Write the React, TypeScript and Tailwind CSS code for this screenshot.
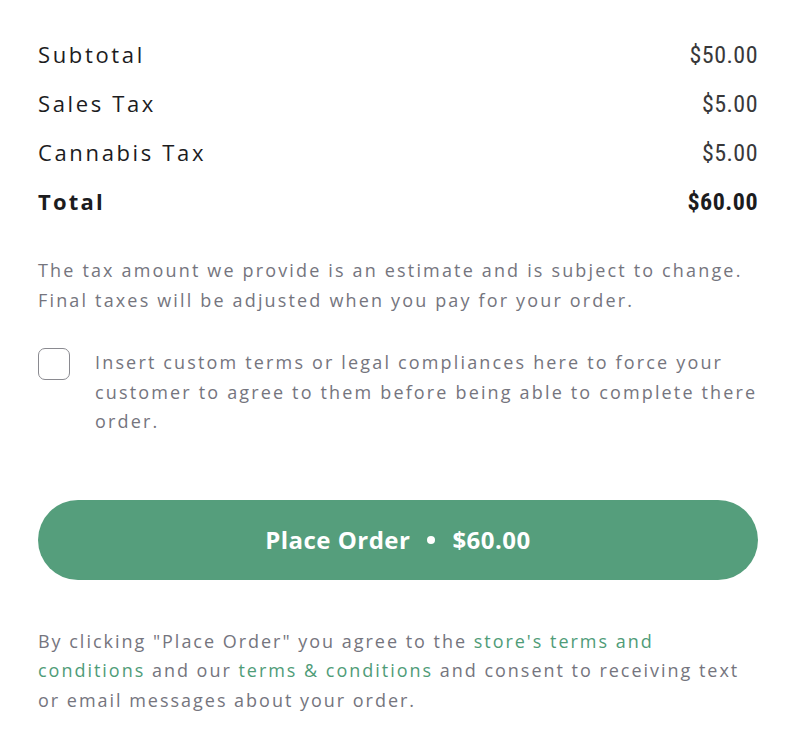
export default function App() {
  const rows = [
    { label: "Subtotal", value: "$50.00" },
    { label: "Sales Tax", value: "$5.00" },
    { label: "Cannabis Tax", value: "$5.00" },
  ];
  const sans = "font-['Open_Sans','Noto_Sans',sans-serif]";
  const num = "font-['Roboto_Condensed','Liberation_Sans_Narrow','DejaVu_Sans_Condensed',sans-serif]";

  return (
    <div className={`min-h-screen bg-white px-[38px] pt-[30px] ${sans}`}>
      {/* totals */}
      <div className="flex flex-col">
        {rows.map((r) => (
          <div key={r.label} className="flex h-[49px] items-center justify-between">
            <span className="text-[22px] tracking-[0.12em] text-[#1c1c1e]">{r.label}</span>
            <span className={`text-[24px] tracking-[0.02em] text-[#38383a] ${num}`}>{r.value}</span>
          </div>
        ))}
        <div className="flex h-[49px] items-center justify-between">
          <span className="text-[22px] font-bold tracking-[0.1em] text-[#1c1c1e]">Total</span>
          <span className={`text-[24px] font-bold tracking-[0.02em] text-[#1c1c1e] ${num}`}>$60.00</span>
        </div>
      </div>

      <p className="mt-[29px] text-[18px] leading-[30px] tracking-[0.12em] text-[#75757e]">
        The tax amount we provide is an estimate and is subject to change. Final taxes will be
        adjusted when you pay for your order.
      </p>

      <label className="mt-[33px] flex items-start gap-[25px]">
        <span className="h-[32px] w-[32px] shrink-0 rounded-[7px] border border-[#8a8a90] bg-white" />
        <span className="text-[18px] leading-[29.5px] tracking-[0.12em] text-[#75757e]">
          Insert custom terms or legal compliances here to force your customer to agree to them
          before being able to complete there order.
        </span>
      </label>

      <button className="mt-[63px] flex h-[80px] w-full items-center justify-center gap-[17px] rounded-full bg-[#559e7c] text-[24px] font-bold tracking-[0.02em] text-white">
        <span>Place Order</span>
        <span className="h-[8px] w-[8px] rounded-full bg-white" />
        <span>$60.00</span>
      </button>

      <p className="mt-[47px] text-[18px] leading-[29.5px] tracking-[0.11em] text-[#75757e]">
        By clicking "Place Order" you agree to the{" "}
        <a className="text-[#4f9c78]">store's terms and conditions</a> and our{" "}
        <a className="text-[#4f9c78]">terms &amp; conditions</a> and consent to receiving text or
        email messages about your order.
      </p>
    </div>
  );
}
